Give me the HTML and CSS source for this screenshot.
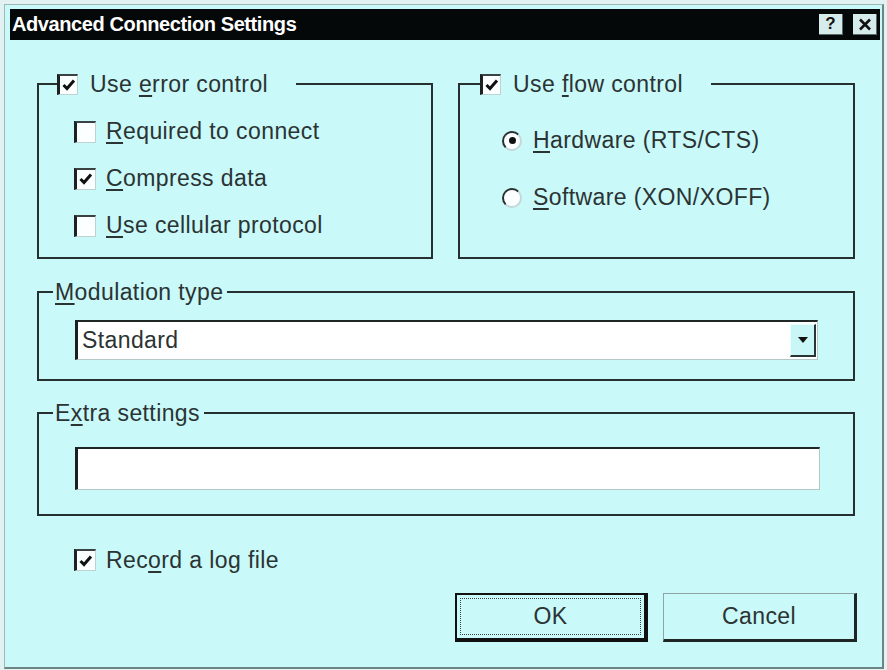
FILE: index.html
```html
<!DOCTYPE html>
<html lang="en">
<head>
    <meta charset="UTF-8">
    <title>Advanced Connection Settings</title>
    <link rel="stylesheet" href="styles.css">
</head>
<body>
<div class="window">
    <div class="titlebar">
        <span class="title">Advanced Connection Settings</span>
        <span class="tbtn help">?</span>
        <span class="tbtn close">
            <svg width="14" height="13" viewBox="0 0 14 13"><path d="M2 1.5 L12 11.5 M12 1.5 L2 11.5" stroke="#111" stroke-width="2.6" fill="none"/></svg>
        </span>
    </div>

    <div class="content">
        <div class="top-row">
            <fieldset class="group group-error">
                <legend class="check-legend">
                    <span class="opt-inline">
                        <span class="check on"><svg width="16" height="16" viewBox="0 0 16 16"><path d="M2.5 8 L6 11.5 L13 3.5" stroke="#111" stroke-width="3" fill="none"/></svg></span>
                        <span>Use <u>e</u>rror control</span>
                    </span>
                </legend>
                <div class="rows">
                    <label class="opt"><span class="check"></span><span><u>R</u>equired to connect</span></label>
                    <label class="opt"><span class="check on"><svg width="16" height="16" viewBox="0 0 16 16"><path d="M2.5 8 L6 11.5 L13 3.5" stroke="#111" stroke-width="3" fill="none"/></svg></span><span><u>C</u>ompress data</span></label>
                    <label class="opt"><span class="check"></span><span><u>U</u>se cellular protocol</span></label>
                </div>
            </fieldset>

            <fieldset class="group group-flow">
                <legend class="check-legend">
                    <span class="opt-inline">
                        <span class="check on"><svg width="16" height="16" viewBox="0 0 16 16"><path d="M2.5 8 L6 11.5 L13 3.5" stroke="#111" stroke-width="3" fill="none"/></svg></span>
                        <span>Use <u>f</u>low control</span>
                    </span>
                </legend>
                <div class="rows">
                    <label class="opt radio-row"><span class="radio on"></span><span><u>H</u>ardware (RTS/CTS)</span></label>
                    <label class="opt radio-row"><span class="radio"></span><span><u>S</u>oftware (XON/XOFF)</span></label>
                </div>
            </fieldset>
        </div>

        <fieldset class="group group-mod">
            <legend><u>M</u>odulation type</legend>
            <div class="inner">
                <div class="combo">
                    <span class="combo-text">Standard</span>
                    <span class="combo-btn"><svg width="10" height="6" viewBox="0 0 10 6"><path d="M0 0 H10 L5 6 Z" fill="#111"/></svg></span>
                </div>
            </div>
        </fieldset>

        <fieldset class="group group-extra">
            <legend>E<u>x</u>tra settings</legend>
            <div class="inner">
                <div class="field"></div>
            </div>
        </fieldset>

        <label class="opt log-row"><span class="check on"><svg width="16" height="16" viewBox="0 0 16 16"><path d="M2.5 8 L6 11.5 L13 3.5" stroke="#111" stroke-width="3" fill="none"/></svg></span><span>Rec<u>o</u>rd a log file</span></label>

        <div class="buttons">
            <button class="btn btn-default"><span class="focus">OK</span></button>
            <button class="btn">Cancel</button>
        </div>
    </div>
</div>
</body>
</html>
```
FILE: styles.css
```css
*{
    box-sizing:border-box;
}
body{
    margin:0;
    background:#e2f2f2;
    font-family:"Liberation Sans", Arial, sans-serif;
    color:#2b3333;
}
.window{
    width:880px;
    height:665px;
    margin:4px 0 0 4px;
    background:#c9f9f9;
    border-left:1px solid #9fb8b8;
    border-top:1px solid #9fb8b8;
    border-right:2px solid #6d8585;
    border-bottom:2px solid #6d8585;
    display:flex;
    flex-direction:column;
}
.titlebar{
    height:31px;
    margin:4px 2px 0 5px;
    padding:0 3px 0 2px;
    background:#050808;
    color:#fff;
    display:flex;
    align-items:center;
}
.title{
    flex:1;
    font-size:20px;
    font-weight:bold;
    letter-spacing:-0.4px;
}
.tbtn{
    width:24px;
    height:21px;
    background:#d6ecec;
    color:#111;
    border-right:1px solid #5a6a6a;
    border-bottom:1px solid #5a6a6a;
    display:flex;
    align-items:center;
    justify-content:center;
    font-size:17px;
    font-weight:bold;
}
.close{
    margin-left:10px;
}
.content{
    flex:1;
    padding:32px 27px 25px 32px;
    display:flex;
    flex-direction:column;
    font-size:23px;
    letter-spacing:.4px;
}
u{
    text-decoration-thickness:2px;
    text-underline-offset:3px;
}
.top-row{
    display:flex;
    gap:25px;
}
.group{
    margin:0;
    padding:0;
    min-width:0;
    border:2px solid #263030;
}
.group-error{
    flex:0 0 396px;
}
.group-flow{
    flex:1 1 0;
}
legend{
    font-size:23px;
    line-height:24px;
    margin-left:14px;
    padding:0 4px 0 2px;
}
legend.check-legend{
    margin-left:18px;
    padding:0 28px 0 0;
}
.group-flow legend.check-legend{
    margin-left:20px;
}
.opt-inline{
    display:inline-flex;
    align-items:center;
    gap:12px;
    vertical-align:top;
    height:24px;
}
.opt{
    display:flex;
    align-items:center;
    gap:10px;
    height:47px;
}
.group-error .rows{
    padding:12px 0 8px 35px;
}
.group-flow .rows{
    padding:16px 0 0 42px;
}
.radio-row{
    height:57px;
    gap:11px;
}
.check{
    width:22px;
    height:22px;
    flex:none;
    background:#fbffff;
    border-top:2px solid #3a4242;
    border-left:3px solid #1c2222;
    border-right:1px solid #bfd2d2;
    border-bottom:1px solid #bfd2d2;
    display:flex;
    align-items:center;
    justify-content:center;
}
.check-legend .check{
    width:21px;
    height:21px;
}
.radio{
    width:20px;
    height:20px;
    flex:none;
    border-radius:50%;
    background:#fbffff;
    border:2px solid;
    border-color:#2a3030 #c4d8d8 #c4d8d8 #2a3030;
    display:flex;
    align-items:center;
    justify-content:center;
}
.radio.on::after{
    content:"";
    width:7px;
    height:7px;
    border-radius:50%;
    background:#111;
}
.group-mod{
    margin-top:21px;
}
.group-mod .inner{
    padding:16px 35px 19px 36px;
}
.group-extra{
    margin-top:20px;
}
.group-extra .inner{
    padding:22px 33px 24px 36px;
}
.combo,.field{
    background:#fff;
    border-top:2px solid #1e2626;
    border-left:3px solid #1a2020;
    border-right:1px solid #b5c8c8;
    border-bottom:1px solid #b5c8c8;
}
.combo{
    height:40px;
    display:flex;
    align-items:center;
    padding:0 1px 0 4px;
}
.combo-text{
    flex:1;
}
.combo-btn{
    width:26px;
    height:33px;
    background:#c9f6f6;
    border-top:1px solid #e6ffff;
    border-left:1px solid #e6ffff;
    border-right:2px solid #2a3434;
    border-bottom:2px solid #2a3434;
    display:flex;
    align-items:center;
    justify-content:center;
}
.field{
    height:43px;
}
.log-row{
    margin-top:29px;
    height:30px;
    padding-left:37px;
}
.buttons{
    margin-top:18px;
    margin-right:-2px;
    display:flex;
    justify-content:flex-end;
    gap:15px;
}
.btn{
    width:194px;
    height:49px;
    background:#c9f9f9;
    font-family:"Liberation Sans", Arial, sans-serif;
    font-size:23px;
    letter-spacing:.4px;
    color:#2b3333;
    border-top:1px solid #8fa5a5;
    border-left:1px solid #8fa5a5;
    border-right:3px solid #1e2626;
    border-bottom:3px solid #1e2626;
    padding:0;
}
.btn-default{
    width:193px;
    border:2px solid #111;
    border-right-width:4px;
    border-bottom-width:4px;
    padding:3px;
}
.focus{
    display:flex;
    align-items:center;
    justify-content:center;
    height:100%;
    border:1px dotted #3a4444;
}
```
